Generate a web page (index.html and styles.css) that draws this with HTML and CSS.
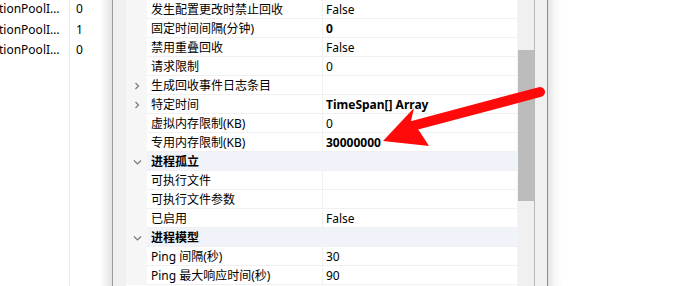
FILE: index.html
```html
<!DOCTYPE html>
<html>
<head>
  <meta charset="utf-8">
  <title>应用程序池高级设置</title>
  <link rel="stylesheet" href="styles.css">
</head>
<body>
  <div class="screen">
    <div class="left-pane">
      <div class="lrow"><span class="lname">tionPoolI…</span><span class="lval">0</span></div>
      <div class="lrow"><span class="lname">tionPoolI…</span><span class="lval">1</span></div>
      <div class="lrow"><span class="lname">tionPoolI…</span><span class="lval">0</span></div>
      <div class="lrow"><span class="lname"></span><span class="lval"></span></div>
    </div>

    <div class="grid">
      <div class="frame-strip"></div>
      <div class="rows">
        <div class="row"><span class="gut"></span><span class="name">发生配置更改时禁止回收</span><span class="val">False</span></div>
        <div class="row"><span class="gut"></span><span class="name">固定时间间隔(分钟)</span><span class="val bold">0</span></div>
        <div class="row"><span class="gut"></span><span class="name">禁用重叠回收</span><span class="val">False</span></div>
        <div class="row"><span class="gut"></span><span class="name">请求限制</span><span class="val">0</span></div>
        <div class="row"><span class="gut"><svg class="chev" width="8" height="8" viewBox="0 0 8 8"><polyline points="2.5,1 5.5,4 2.5,7"/></svg></span><span class="name">生成回收事件日志条目</span><span class="val"></span></div>
        <div class="row"><span class="gut"><svg class="chev" width="8" height="8" viewBox="0 0 8 8"><polyline points="2.5,1 5.5,4 2.5,7"/></svg></span><span class="name">特定时间</span><span class="val bold">TimeSpan[] Array</span></div>
        <div class="row"><span class="gut"></span><span class="name">虚拟内存限制(KB)</span><span class="val">0</span></div>
        <div class="row"><span class="gut"></span><span class="name">专用内存限制(KB)</span><span class="val bold">30000000</span></div>
        <div class="row cat"><span class="gut"><svg class="chev" width="9" height="8" viewBox="0 0 9 8"><polyline points="1,2.5 4.5,6 8,2.5"/></svg></span><span class="name">进程孤立</span></div>
        <div class="row"><span class="gut"></span><span class="name">可执行文件</span><span class="val"></span></div>
        <div class="row"><span class="gut"></span><span class="name">可执行文件参数</span><span class="val"></span></div>
        <div class="row"><span class="gut"></span><span class="name">已启用</span><span class="val">False</span></div>
        <div class="row cat"><span class="gut"><svg class="chev" width="9" height="8" viewBox="0 0 9 8"><polyline points="1,2.5 4.5,6 8,2.5"/></svg></span><span class="name">进程模型</span></div>
        <div class="row"><span class="gut"></span><span class="name">Ping 间隔(秒)</span><span class="val">30</span></div>
        <div class="row"><span class="gut"></span><span class="name">Ping 最大响应时间(秒)</span><span class="val">90</span></div>
      </div>
      <div class="scrollbar"><div class="thumb"></div></div>
      <div class="frame-right"></div>
    </div>

    <div class="desk"></div>

    <!-- annotation arrow drawn over the grid -->
    <svg class="arrow" width="680" height="286" viewBox="0 0 680 286">
      <line x1="540" y1="92" x2="412" y2="126" />
      <polygon points="383,141 414,108 411,121 420,132 429,146" />
    </svg>
  </div>
</body>
</html>
```

FILE: styles.css
```css
body {
  margin: 0;
  font-family: "Noto Sans", "Noto Sans CJK SC", sans-serif;
  font-size: 12px;
  color: #000;
  background: #fff;
}

.screen {
  position: relative;
  width: 680px;
  height: 286px;
  overflow: hidden;
  display: flex;
}

/* left list, scrolled sideways */
.left-pane {
  position: relative;
  width: 112px;
  flex-shrink: 0;
  border-right: 1px solid #9c9c9c;
  background: linear-gradient(90deg, #fff 100px, #e4e4e4 112px);
  margin-top: -1px;
}
.left-pane::after {
  content: "";
  position: absolute;
  left: 69px;
  top: 0;
  bottom: -300px;
  border-left: 1px solid #ececec;
}
.lrow {
  display: flex;
  height: 20.5px;
  line-height: 20px;
}
.lname {
  width: 70px;
  box-sizing: border-box;
  white-space: nowrap;
  overflow: hidden;
  margin-left: -1px;
}
.lval { padding-left: 7px; }

/* property grid */
.grid {
  display: flex;
  flex-shrink: 0;
}
.frame-strip {
  width: 13px;
  background: #f0f0f0;
}
.rows {
  width: 391px;
  background: #fff;
}
.row {
  display: grid;
  grid-template-columns: 21px 176px 194px;
  height: 19px;
  line-height: 20px;
}
.gut {
  background: #f6f6f6;
  display: flex;
  align-items: center;
  justify-content: center;
  padding-left: 1px;
  padding-top: 1px;
}
.name, .val {
  box-sizing: border-box;
  border-bottom: 1px solid #f0f0f0;
  white-space: nowrap;
  overflow: hidden;
}
.name {
  padding-left: 4px;
  border-right: 1px solid #f0f0f0;
}
.val { padding-left: 3px; }
.bold { font-weight: bold; }

.row.cat .name {
  grid-column: span 2;
  font-weight: bold;
  background: #f0f3f9;
  border-right: none;
}

.chev {
  fill: none;
  stroke: #7a7a7a;
  stroke-width: 1.2;
}

.scrollbar {
  width: 16px;
  border-left: 1px solid #f4f4f4;
  background: #f0f0f0;
  padding-top: 50px;
  border-right: 1px solid #b8b8b8;
}
.thumb {
  height: 151px;
  background: #bcbcbc;
}
.frame-right {
  width: 12px;
  background: #f0f0f0;
  border-right: 1px solid #8e8e8e;
}

.desk {
  flex: 1;
  background: linear-gradient(90deg, #e2e2e2 0, #f6f6f6 6px, #fff 14px);
}

/* red callout arrow */
.arrow {
  position: absolute;
  left: 0;
  top: 0;
  pointer-events: none;
}
.arrow line {
  stroke: #fe0a0a;
  stroke-width: 10;
  stroke-linecap: round;
}
.arrow polygon {
  fill: #fe0a0a;
}
```
